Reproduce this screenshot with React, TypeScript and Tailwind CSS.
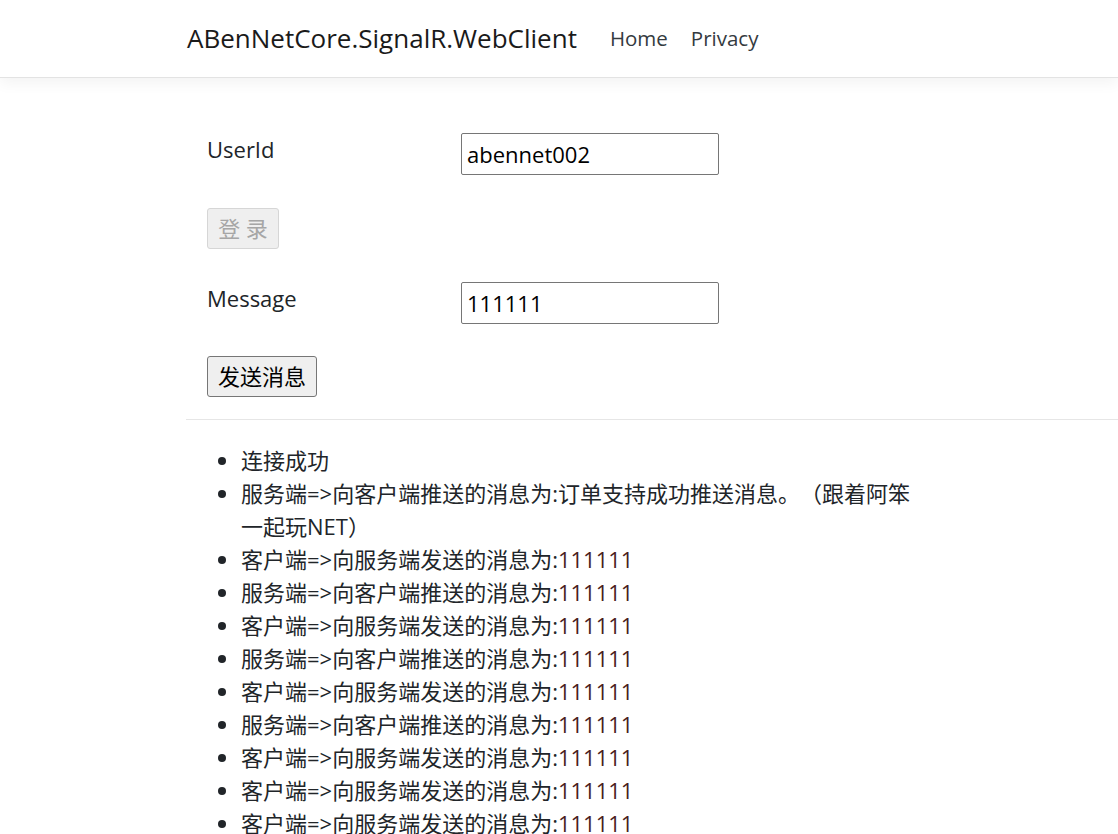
import React from 'react'

const FONT = '"Open Sans", "Noto Sans CJK SC", sans-serif'

const MESSAGES: { text: string; num?: string }[] = [
  { text: '连接成功' },
  { text: '服务端=>向客户端推送的消息为:订单支持成功推送消息。（跟着阿笨一起玩NET）' },
  { text: '客户端=>向服务端发送的消息为:', num: '111111' },
  { text: '服务端=>向客户端推送的消息为:', num: '111111' },
  { text: '客户端=>向服务端发送的消息为:', num: '111111' },
  { text: '服务端=>向客户端推送的消息为:', num: '111111' },
  { text: '客户端=>向服务端发送的消息为:', num: '111111' },
  { text: '服务端=>向客户端推送的消息为:', num: '111111' },
  { text: '客户端=>向服务端发送的消息为:', num: '111111' },
  { text: '客户端=>向服务端发送的消息为:', num: '111111' },
  { text: '客户端=>向服务端发送的消息为:', num: '111111' },
]

function Field({ label, value }: { label: string; value: string }) {
  return (
    <div className="flex items-start">
      <label className="w-[275px] pl-[21px] leading-[33px]">{label}</label>
      <input
        readOnly
        value={value}
        className="w-[258px] h-[42px] border border-[#767676] rounded-[2px] px-[5px] text-[22px] text-black outline-none"
        style={{ fontFamily: FONT }}
      />
    </div>
  )
}

export default function App() {
  return (
    <div className="min-h-screen bg-white text-[#212529] text-[22px] overflow-hidden" style={{ fontFamily: FONT }}>
      {/* Navbar */}
      <header className="h-[78px] border-b border-[#e3e3e3] shadow-[0_5px_14px_rgba(0,0,0,0.05)] bg-white">
        <div className="h-full flex items-center pl-[187px]">
          <span className="text-[26px] text-[#1a1a1a] mr-[33px]">ABenNetCore.SignalR.WebClient</span>
          <nav className="flex gap-[23px] text-[20.5px] text-[#343a40]">
            <span>Home</span>
            <span>Privacy</span>
          </nav>
        </div>
      </header>

      {/* Main */}
      <main className="pl-[186px] pt-[55px]">
        <div className="flex flex-col">
          <Field label="UserId" value="abennet002" />
          <div className="pl-[21px] mt-[33px]">
            <button
              disabled
              className="w-[72px] h-[41px] bg-[#efefef] border border-[#d6d6d6] rounded-[3px] text-[#a6a6a6] text-[22px]"
            >
              登 录
            </button>
          </div>
          <div className="mt-[33px]">
            <Field label="Message" value="111111" />
          </div>
          <div className="pl-[21px] mt-[32px]">
            <button className="w-[110px] h-[41px] bg-[#efefef] border border-[#767676] rounded-[3px] text-black text-[22px]">
              发送消息
            </button>
          </div>
        </div>

        <hr className="mt-[22px] border-t border-[#e6e6e6]" />

        <ul className="list-disc pl-[55px] pt-[24px] w-[740px] leading-[33px] [text-spacing-trim:space-all]">
          {MESSAGES.map((m, i) => (
            <li key={i}>
              {m.text}
              {m.num && <span className="text-[#4a1e1e]">{m.num}</span>}
            </li>
          ))}
        </ul>
      </main>
    </div>
  )
}
